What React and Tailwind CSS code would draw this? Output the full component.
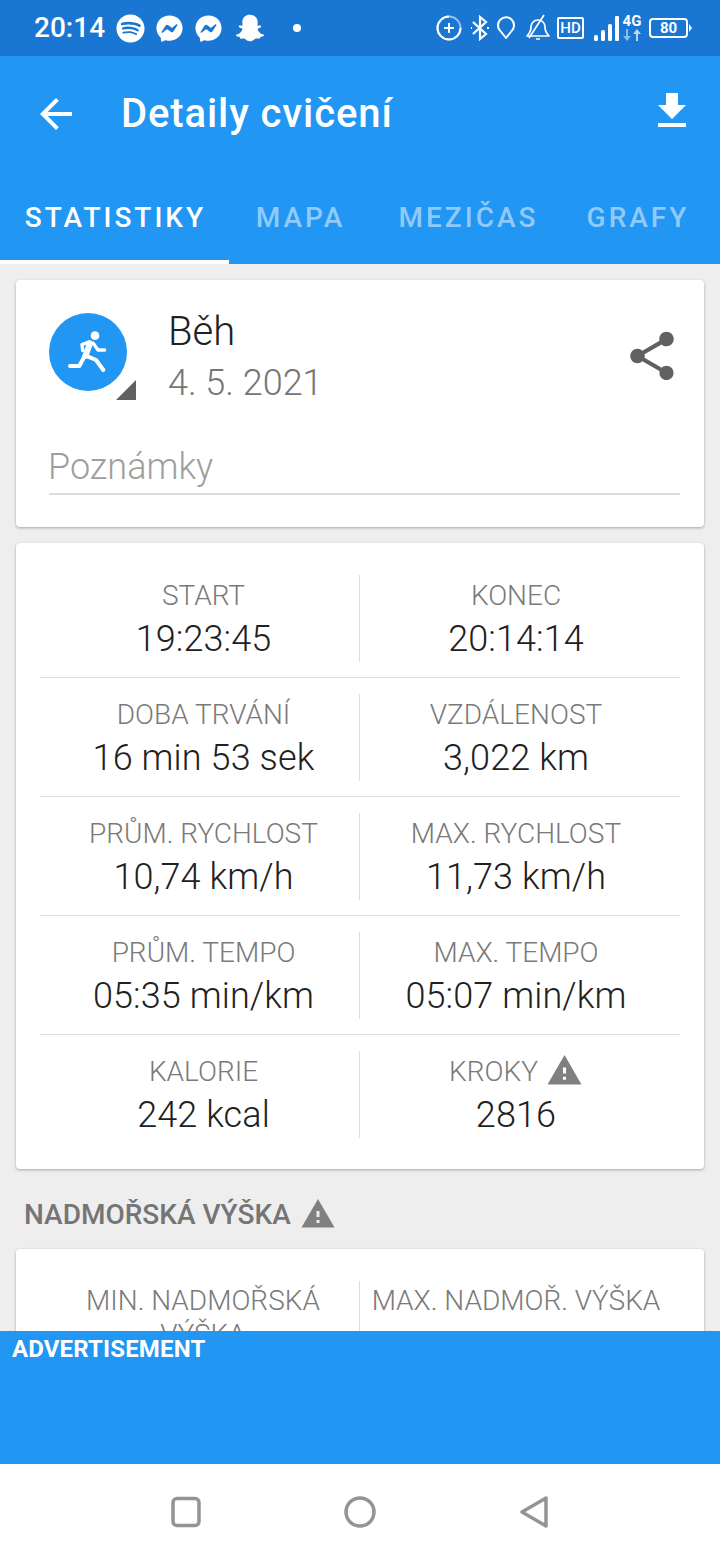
import React from "react";
import { FaSpotify, FaFacebookMessenger, FaSnapchatGhost } from "react-icons/fa";
import { MdShare, MdWarning, MdArrowBack, MdFileDownload } from "react-icons/md";

const rows = [
  [["START", "19:23:45"], ["KONEC", "20:14:14"]],
  [["DOBA TRVÁNÍ", "16 min 53 sek"], ["VZDÁLENOST", "3,022 km"]],
  [["PRŮM. RYCHLOST", "10,74 km/h"], ["MAX. RYCHLOST", "11,73 km/h"]],
  [["PRŮM. TEMPO", "05:35 min/km"], ["MAX. TEMPO", "05:07 min/km"]],
  [["KALORIE", "242 kcal"], ["KROKY", "2816", true]],
];

function Cell({ label, value, warn, left }) {
  return (
    <div className={`h-[87px] flex flex-col items-center pt-[3px] ${left ? "w-[319px] pl-[8px]" : "flex-1 min-w-0 pr-[8px]"}`}>
      <div className="flex items-center h-[36px] text-[28px] leading-[36px] font-light text-[#7a7a7a]">
        {label}
        {warn && <MdWarning className="ml-[8px] text-[#808080] -mt-[3px]" size={37} />}
      </div>
      <div className="h-[46px] mt-[2px] text-[36px] leading-[46px] tracking-[0.1px] font-light text-[#212121]">{value}</div>
    </div>
  );
}

function StatusBar() {
  return (
    <div className="h-[56px] bg-[#1976d2] flex items-center text-white pl-[34px] shrink-0">
      <span className="text-[28px] font-medium leading-none w-[82px]">20:14</span>
      <FaSpotify size={29} />
      <FaFacebookMessenger size={27} className="ml-[11px]" />
      <FaFacebookMessenger size={27} className="ml-[12px]" />
      <FaSnapchatGhost size={28} className="ml-[14px]" />
      <span className="ml-[29px] w-[8px] h-[8px] rounded-full bg-white" />
      <div className="ml-auto flex items-center pr-[28px]">
        <svg width="26" height="26" viewBox="0 0 26 26" fill="none" stroke="white" strokeWidth="2">
          <circle cx="13" cy="13" r="11.5" strokeOpacity="0.55" />
          <path d="M13 1.500A11.500 11.500 0 1 0 24.500 13" />
          <path d="M8 13h10M13 8v10" />
        </svg>
        <svg className="ml-[8px]" width="20" height="26" viewBox="0 0 20 26" fill="none" stroke="white" strokeWidth="2.200">
          <path d="M3 7l13 12-6 5V2l6 5L3 19" />
          <path d="M1 13h1M17 13h2" />
        </svg>
        <svg className="ml-[7px]" width="18" height="26" viewBox="0 0 18 26" fill="none" stroke="white" strokeWidth="2">
          <path d="M9 23L3 15.500A8 8 0 1 1 15 15.500Z" strokeLinejoin="round" />
        </svg>
        <svg className="ml-[10px]" width="26" height="28" viewBox="0 0 26 28" fill="none" stroke="white" strokeWidth="1.700">
          <path d="M2 22c2-2 4-4 4-9 0-4 3-7 7-7s7 3 7 7c0 5 2 7 4 9Z" strokeLinejoin="round" />
          <path d="M11 25h4M4 24L19 1" />
        </svg>
        <div className="ml-[6px] w-[27px] h-[22px] border-2 border-white rounded-[2px] flex items-center justify-center text-[15px] font-medium leading-none">HD</div>
        <svg className="ml-[10px]" width="26" height="28" viewBox="0 0 26 28" fill="white">
          <rect x="0" y="21" width="4" height="6" rx="1.500" />
          <rect x="7" y="16" width="4" height="11" rx="1.500" />
          <rect x="14" y="10" width="4" height="17" rx="1.500" />
          <rect x="21" y="2" width="4" height="25" rx="1" />
        </svg>
        <div className="ml-[2px] w-[20px] h-[28px] flex flex-col items-center">
          <span className="text-[15px] font-bold leading-[14px]">4G</span>
          <svg className="mt-[1px]" width="18" height="12" viewBox="0 0 18 12" fill="white">
            <path d="M3 0h2v7h3l-4 5-4-5h3Z" fillOpacity="0.5" />
            <path d="M13 12h2V5h3l-4-5-4 5h3Z" fillOpacity="0.7" />
          </svg>
        </div>
        <div className="ml-[7px] w-[39px] h-[20px] border-2 border-white rounded-[4px] flex items-center justify-center text-[15px] font-bold leading-none">80</div>
        <span className="ml-[1px] w-0 h-0 border-y-[4px] border-y-transparent border-l-[3px] border-l-white" />
      </div>
    </div>
  );
}

function RunIcon() {
  return (
    <svg width="44" height="44" viewBox="200 150 132 132" fill="none" stroke="white" strokeLinecap="round" strokeLinejoin="round">
      <circle cx="287" cy="167" r="13" fill="white" stroke="none" />
      <path d="M272 190L258 228" strokeWidth="18" />
      <path d="M268 186L248 194L250 212" strokeWidth="10" />
      <path d="M282 190L296 210H316" strokeWidth="10" />
      <path d="M256 228L240 258H212" strokeWidth="12" />
      <path d="M258 226L290 240L312 270" strokeWidth="12" />
    </svg>
  );
}

export default function App() {
  return (
    <div className="w-[720px] h-[1560px] flex flex-col overflow-hidden bg-[#eeeeee] font-['Roboto',sans-serif]">
      <StatusBar />
      <div className="h-[116px] bg-[#2196f3] flex items-center text-white shrink-0 pl-[32px] pr-[24px]">
        <MdArrowBack size={48} />
        <span className="ml-[41px] text-[40px] font-medium leading-none tracking-[0.9px]">Detaily cvičení</span>
        <MdFileDownload size={48} className="ml-auto -mt-[6px]" />
      </div>
      <div className="h-[92px] bg-[#2196f3] flex shrink-0 text-[28px] leading-[38px] font-medium tracking-[3px] text-white/50">
        <div className="w-[229px] flex justify-center pt-[27px] pl-[2px] border-b-[4px] border-white text-white">STATISTIKY</div>
        <div className="w-[143px] flex justify-center pt-[27px]">MAPA</div>
        <div className="w-[192px] flex justify-center pt-[27px] pl-[1px]">MEZIČAS</div>
        <div className="flex-1 flex justify-center pt-[27px] pr-[8px]">GRAFY</div>
      </div>

      <div className="flex-1 min-h-0 overflow-hidden px-[16px] pt-[16px] flex flex-col gap-[16px]">
        <div className="h-[247px] shrink-0 bg-white rounded-[4px] shadow-[0_1px_3px_rgba(0,0,0,0.3)] px-[33px] pt-[33px]">
          <div className="flex h-[78px]">
            <div className="relative w-[78px] h-[78px] rounded-full bg-[#2196f3] flex items-center justify-center">
              <RunIcon />
              <span className="absolute left-[67px] top-[67px] w-0 h-0 border-b-[20px] border-b-[#616161] border-l-[20px] border-l-transparent" />
            </div>
            <div className="ml-[42px] flex flex-col">
              <span className="text-[40px] leading-[44px] font-light text-[#212121] -mt-[3px] -ml-px">Běh</span>
              <span className="text-[36px] leading-[44px] font-light text-[#757575] mt-[7px] -ml-px">4. 5. 2021</span>
            </div>
            <MdShare size={58} className="ml-auto -mr-[10px] mt-[14px] text-[#616161]" />
          </div>
          <div className="mt-[52px] h-[52px] border-b-2 border-[#dddddd] w-[631px] text-[36px] leading-[48px] font-light text-[#9e9e9e]">
            <span className="-ml-px">Poznámky</span>
          </div>
        </div>

        <div className="h-[626px] shrink-0 bg-white rounded-[4px] shadow-[0_1px_3px_rgba(0,0,0,0.3)] px-[24px] pt-[16px]">
          {rows.map((r, i) => (
            <div key={i} className={`flex items-center h-[119px] ${i < rows.length - 1 ? "border-b border-[#dddddd]" : ""}`}>
              <Cell left label={r[0][0]} value={r[0][1]} />
              <div className="w-px h-[87px] bg-[#dddddd]" />
              <Cell label={r[1][0]} value={r[1][1]} warn={r[1][2]} />
            </div>
          ))}
        </div>

        <div className="flex items-center h-[60px] pl-[8px] text-[28px] font-medium text-[#757575] shrink-0">
          NADMOŘSKÁ VÝŠKA
          <MdWarning size={36} className="ml-[9px] text-[#808080] -mt-[3px]" />
        </div>

        <div className="h-[200px] shrink-0 -mt-[12px] bg-white rounded-[4px] shadow-[0_1px_3px_rgba(0,0,0,0.3)] px-[24px] pt-[32px]">
          <div className="flex">
            <div className="w-[319px] mt-[3px] text-center text-[28px] leading-[34px] font-light text-[#7a7a7a] pl-[30px] pr-[23px]">MIN. NADMOŘSKÁ VÝŠKA</div>
            <div className="w-px h-[87px] bg-[#dddddd]" />
            <div className="flex-1 min-w-0 mt-[3px] text-center text-[28px] leading-[34px] font-light text-[#7a7a7a] whitespace-nowrap pr-[8px]">MAX. NADMOŘ. VÝŠKA</div>
          </div>
        </div>
      </div>

      <div className="h-[133px] bg-[#2196f3] shrink-0 pl-[12px] pt-[2px] text-[24px] leading-[32px] tracking-[0.15px] font-bold text-white">ADVERTISEMENT</div>
      <div className="h-[96px] bg-white shrink-0 flex items-center justify-center">
        <svg width="32" height="32" viewBox="0 0 32 32" fill="none" stroke="#949494" strokeWidth="3.500">
          <rect x="3" y="2.500" width="26" height="27" rx="4" />
        </svg>
        <svg className="ml-[141px]" width="34" height="34" viewBox="0 0 34 34" fill="none" stroke="#949494" strokeWidth="3.500">
          <circle cx="17" cy="17" r="14" />
        </svg>
        <svg className="ml-[142px]" width="32" height="34" viewBox="0 0 32 34" fill="none" stroke="#949494" strokeWidth="3.500" strokeLinejoin="round">
          <path d="M27 3v28L3 17Z" />
        </svg>
      </div>
    </div>
  );
}
